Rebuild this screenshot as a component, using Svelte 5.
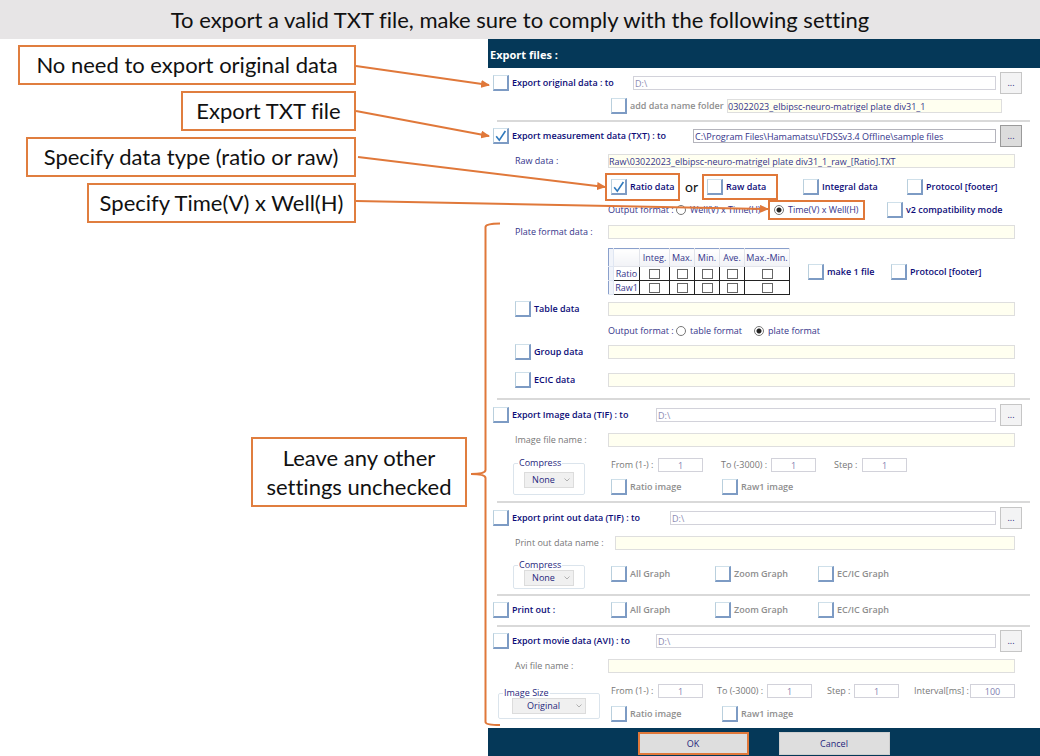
<script>
  const notes = [
    { text: 'No need to export original data', size: 'n1' },
    { text: 'Export TXT file', size: 'n2' },
    { text: 'Specify data type (ratio or raw)', size: 'n3' },
    { text: 'Specify Time(V) x Well(H)', size: 'n4' }
  ];
  const stats = ['Integ.', 'Max.', 'Min.', 'Ave.', 'Max.-Min.'];
  const plateRows = ['Ratio', 'Raw1'];
  const graphs = ['All Graph', 'Zoom Graph', 'EC/IC Graph'];
  const folder = '03022023_elbipsc-neuro-matrigel plate div31_1';
</script>

{#snippet check(text, on = false, off = false, cls = '')}
  <label class="check {cls}" class:off>
    <span class="box">
      <input type="checkbox" checked={on} />
      {#if on}
        <svg viewBox="0 0 16 16" aria-hidden="true"><path d="M3.2 8.2 6.3 12.2 12.4 3" /></svg>
      {/if}
    </span>
    <span>{text}</span>
  </label>
{/snippet}

{#snippet radio(text, group, on = false, cls = '')}
  <label class="radio {cls}"><input type="radio" name={group} checked={on} /><span>{text}</span></label>
{/snippet}

{#snippet num(id, text, value)}
  <label for={id}>{text}</label>
  <input {id} class="field num" type="text" {value} />
{/snippet}

{#snippet pick(title, value, cls)}
  <fieldset class={cls}>
    <legend>{title}</legend>
    <span class="pick">
      <select aria-label={title}><option>{value}</option></select>
      <svg viewBox="0 0 8 6" aria-hidden="true"><path d="M1.5 1.5 4 4 6.5 1.5" /></svg>
    </span>
  </fieldset>
{/snippet}

<div class="page">
  <h1>To export a valid TXT file, make sure to comply with the following setting</h1>

  <main>
    <aside>
      {#each notes as n}
        <p class="note {n.size}">{n.text}</p>
      {/each}
      <p class="note rest">Leave any other<br />settings unchecked</p>
    </aside>

    <form class="dialog" onsubmit={(e) => e.preventDefault()}>
      <h2>Export files :</h2>

      <section class="first">
        <div class="row path p1 h22">
          {@render check('Export original data : to')}
          <input class="field dim" type="text" aria-label="Original data folder" value="D:\" />
          <button type="button" class="browse">...</button>
        </div>
        <div class="row folder h24">
          {@render check('add data name folder', false, true)}
          <input class="field cream" type="text" aria-label="Data name folder" value={folder} />
        </div>
      </section>
      <hr />

      <section>
        <div class="row path p2 h28">
          {@render check('Export measurement data (TXT) : to', true)}
          <input class="field strong" type="text" aria-label="Measurement data folder" value="C:\Program Files\Hamamatsu\FDSSv3.4 Offline\sample files" />
          <button type="button" class="browse dark">...</button>
        </div>
        <div class="row named h22">
          <label for="raw">Raw data :</label>
          <input id="raw" class="field cream" type="text" value="Raw\{folder}_raw_[Ratio].TXT" />
        </div>
        <div class="row kinds h30">
          {@render check('Ratio data', true, false, 'ring')}
          <span class="or">or</span>
          {@render check('Raw data', false, false, 'ring roomy')}
          {@render check('Integral data')}
          {@render check('Protocol [footer]')}
        </div>
        <div class="row output h14">
          <span>Output format :</span>
          {@render radio('Well(V) x Time(H)', 'raw-format')}
          {@render radio('Time(V) x Well(H)', 'raw-format', true, 'ring')}
          {@render check('v2 compatibility mode')}
        </div>
        <div class="row named h32">
          <label for="plate">Plate format data :</label>
          <input id="plate" class="field cream" type="text" value="" />
        </div>
        <div class="row plate">
          <table>
            <colgroup>
              <col class="c-edge" /><col class="c-name" /><col class="c-integ" /><col class="c-max" /><col class="c-min" /><col class="c-ave" /><col />
            </colgroup>
            <thead>
              <tr><th class="edge"></th><th class="corner"></th>{#each stats as s}<th scope="col">{s}</th>{/each}</tr>
            </thead>
            <tbody>
              {#each plateRows as r}
                <tr>
                  <td class="edge"></td>
                  <th scope="row">{r}</th>
                  {#each stats as s}
                    <td><input type="checkbox" aria-label="{r} {s}" /></td>
                  {/each}
                </tr>
              {/each}
            </tbody>
          </table>
          {@render check('make 1 file')}
          {@render check('Protocol [footer]')}
        </div>
        <div class="row named h28">
          {@render check('Table data')}
          <input class="field cream" type="text" aria-label="Table data name" value="" />
        </div>
        <div class="row output2 h16">
          <span>Output format :</span>
          {@render radio('table format', 'table-format')}
          {@render radio('plate format', 'table-format', true)}
        </div>
        <div class="row named h26">
          {@render check('Group data')}
          <input class="field cream" type="text" aria-label="Group data name" value="" />
        </div>
        <div class="row named h30">
          {@render check('ECIC data')}
          <input class="field cream" type="text" aria-label="ECIC data name" value="" />
        </div>
      </section>
      <hr />

      <section>
        <div class="row path p3 h30">
          {@render check('Export Image data (TIF) : to')}
          <input class="field dim" type="text" aria-label="Image data folder" value="D:\" />
          <button type="button" class="browse">...</button>
        </div>
        <div class="row named grey h20">
          <label for="img">Image file name :</label>
          <input id="img" class="field cream" type="text" value="" />
        </div>
        <div class="split">
          {@render pick('Compress', 'None', 'compress')}
          <div>
            <div class="nums grey h24">
              {@render num('i-from', 'From (1-) :', '1')}
              {@render num('i-to', 'To (-3000) :', '1')}
              {@render num('i-step', 'Step :', '1')}
            </div>
            <div class="images h20">
              {@render check('Ratio image', false, true)}
              {@render check('Raw1 image', false, true)}
            </div>
          </div>
        </div>
      </section>
      <hr class="loose" />

      <section>
        <div class="row path p4 h30">
          {@render check('Export print out data (TIF) : to')}
          <input class="field dim" type="text" aria-label="Print out data folder" value="D:\" />
          <button type="button" class="browse">...</button>
        </div>
        <div class="row named wide grey h20">
          <label for="prn">Print out data name :</label>
          <input id="prn" class="field cream" type="text" value="" />
        </div>
        <div class="split print">
          {@render pick('Compress', 'None', 'compress low')}
          <div class="graphs">
            {#each graphs as g}{@render check(g, false, true)}{/each}
          </div>
        </div>
      </section>
      <hr />

      <section>
        <div class="split single h28">
          <div class="lead">{@render check('Print out :')}</div>
          <div class="graphs">
            {#each graphs as g}{@render check(g, false, true)}{/each}
          </div>
        </div>
      </section>
      <hr class="tight" />

      <section>
        <div class="row path p3 h28">
          {@render check('Export movie data (AVI) : to')}
          <input class="field dim" type="text" aria-label="Movie data folder" value="D:\" />
          <button type="button" class="browse">...</button>
        </div>
        <div class="row named grey h22">
          <label for="avi">Avi file name :</label>
          <input id="avi" class="field cream" type="text" value="" />
        </div>
        <div class="split movie">
          {@render pick('Image Size', 'Original', 'imgsize')}
          <div>
            <div class="nums four grey h24">
              {@render num('m-from', 'From (1-) :', '1')}
              {@render num('m-to', 'To (-3000) :', '1')}
              {@render num('m-step', 'Step :', '1')}
              {@render num('m-int', 'Interval[ms] :', '100')}
            </div>
            <div class="images h22">
              {@render check('Ratio image', false, true)}
              {@render check('Raw1 image', false, true)}
            </div>
          </div>
        </div>
      </section>

      <footer>
        <button type="submit" class="ok">OK</button>
        <button type="button">Cancel</button>
      </footer>
    </form>

    <svg class="arrows" width="800" height="717" viewBox="0 39 800 717" aria-hidden="true">
      <defs>
        <marker id="head" markerUnits="userSpaceOnUse" markerWidth="9" markerHeight="8" refX="8" refY="4" orient="auto">
          <path class="tip" d="M0 0 9 4 0 8Z" />
        </marker>
      </defs>
      <path marker-end="url(#head)" d="M356 66 489 85" />
      <path marker-end="url(#head)" d="M356 111 489 136" />
      <path marker-end="url(#head)" d="M358 157 605 187" />
      <path marker-end="url(#head)" d="M356 201 768 209" />
      <path d="M500 223.500Q485.500 223.500 485.500 227V470Q485.500 474 471 474Q485.500 474 485.500 478V722Q485.500 725 500 725" />
    </svg>
  </main>
</div>

<style>
  :global(body) { margin: 0; background: #fff; }
  .page { font: 9px/12px "Open Sans", "Noto Sans", sans-serif; color: #34348a; }
  h1 {
    margin: 0; height: 39px; background: #e7e5e6; color: #111; text-align: center;
    font: 400 22px/39px Lato, sans-serif; font-variant-ligatures: none;
  }
  main { position: relative; display: grid; grid-template-columns: 488px 1fr; }
  aside { display: flex; flex-direction: column; align-items: flex-end; gap: 6px; padding: 6px 132px 0 0; }
  .note {
    box-sizing: border-box; margin: 0; min-height: 40px; border: 2px solid #e07e3f; background: #fff; color: #111;
    font: 22px/36px Lato, sans-serif; font-variant-ligatures: none; text-align: center; white-space: nowrap;
  }
  .n1 { min-width: 338px; }
  .n2 { min-width: 175px; }
  .n3 { min-width: 330px; }
  .n4 { min-width: 269px; }
  .rest { min-width: 216px; margin: 208px -111px 0 0; padding: 4px 0; line-height: 29px; }

  .arrows { position: absolute; left: 0; top: 0; pointer-events: none; fill: none; stroke: #e0783a; stroke-width: 2; }
  .tip { fill: #e0783a; stroke: none; }

  .dialog { min-width: 0; background: #fff; }
  h2 { margin: 0; height: 29px; background: #053858; color: #fff; padding-left: 2px; font: 700 11px/31px "Open Sans", sans-serif; }
  hr { margin: 3px 10px 0 9px; border: 0; height: 2px; background: #d9d9d9; }
  .first { padding-top: 4px; }
  .first + hr { margin-top: 2px; }
  .loose { margin-top: 4px; }
  .tight { margin-top: 1px; }
  .h14 { height: 14px; } .h16 { height: 16px; } .h20 { height: 20px; } .h22 { height: 22px; } .h24 { height: 24px; }
  .h26 { height: 26px; } .h28 { height: 28px; } .h30 { height: 30px; } .h32 { height: 32px; }

  .row, .nums, .images, .graphs { display: grid; align-items: center; white-space: nowrap; }
  .path { padding: 0 18px 0 5px; }
  .p1 { grid-template-columns: 140px 1fr 26px; }
  .p2 { grid-template-columns: 200px 1fr 26px; }
  .p3 { grid-template-columns: 163px 1fr 26px; }
  .p4 { grid-template-columns: 177px 1fr 26px; }
  .folder { grid-template-columns: 116px 1fr; padding: 0 38px 0 123px; }
  .named { grid-template-columns: 93px 1fr; padding: 0 25px 0 27px; }
  .wide { grid-template-columns: 100px 1fr; }
  .kinds { grid-template-columns: 72px 24px 96px 104px 1fr; padding-left: 123px; }
  .output { grid-template-columns: 68px 98px 113px 1fr; padding-left: 120px; }
  .output2 { grid-template-columns: 68px 78px 1fr; padding-left: 120px; }
  .plate { grid-template-columns: 200px 83px 1fr; padding-left: 120px; height: 47px; }
  .split { display: grid; grid-template-columns: 123px 1fr; padding-top: 3px; }
  .print { padding-top: 7px; height: 31px; align-items: start; }
  .single { padding-top: 0; align-items: center; }
  .lead { padding-left: 5px; }
  .nums { grid-template-columns: 47px 63px 50px 63px 28px 45px; }
  .four { grid-template-columns: 47px 59px 50px 60px 27px 60px 56px 45px; }
  .images { grid-template-columns: 111px 1fr; }
  .graphs { grid-template-columns: 104px 103px 1fr; height: 28px; }
  .movie { padding: 2px 0 3px; }

  .check { display: flex; align-items: center; gap: 3px; font-weight: 600; color: #0c0c78; justify-self: start; }
  .off { color: #8e8e8e; }
  .box { display: grid; width: 16px; height: 16px; }
  .box > * { grid-area: 1 / 1; }
  .box input {
    appearance: none; box-sizing: border-box; margin: 0; width: 16px; height: 16px; background: #fff;
    border: solid; border-width: 1px 2px 2px 1px; border-color: #cfe0ea #7d9bc4 #7d9bc4 #b9cfdd;
  }
  .box svg { width: 16px; height: 16px; fill: none; stroke: #2f79bd; stroke-width: 1.6; pointer-events: none; }
  .ring { outline: 2px solid #e0783a; outline-offset: 4px; }
  .roomy { padding-right: 7px; outline-offset: 3px; }
  .radio.ring { outline-offset: 2px; padding: 0 2px; margin-left: -2px; }
  .or { color: #111; font: 14px/16px Lato, sans-serif; padding-left: 2px; }

  .radio { display: flex; align-items: center; gap: 4px; justify-self: start; }
  .radio input {
    appearance: none; box-sizing: border-box; margin: 0; width: 10px; height: 10px; border: 1px solid #777; border-radius: 50%; background: #fff;
  }
  .radio input:checked { background: radial-gradient(circle, #222 0 2px, #fff 3px); }

  .field {
    box-sizing: border-box; width: 100%; min-width: 0; height: 14px; margin: 0; padding: 0 1px; border: 1px solid #d2d2da;
    background: #fff; color: #34348a; font: inherit; border-radius: 0;
  }
  .cream { background: #fffff0; border-color: #dedede; padding: 0; }
  .strong { border-color: #b4b4bc; }
  .dim { color: #8c8cb4; }
  .num { text-align: center; color: #8080b0; width: 45px; }
  .grey { color: #777; }
  button { font: inherit; color: #26267c; }
  .browse {
    justify-self: end; box-sizing: border-box; width: 22px; height: 22px; padding: 0; border: 1px solid #c6c6c6; background: #f3f3f4;
  }
  .dark { background: #dcdcdc; border-color: #9a9a9a; }

  table { border-collapse: collapse; width: 182px; height: 47px; border: 1px solid #8aa0cc; table-layout: fixed; }
  .c-edge { width: 5px; } .c-name { width: 26px; } .c-integ { width: 30px; } .c-max { width: 25px; } .c-min, .c-ave { width: 25px; }
  th, td { padding: 0; border: 1px solid #222; text-align: center; font-weight: 400; line-height: 12px; height: 13px; }
  thead th { border: 1px solid #e2e4ea; border-top-color: #8aa0cc; background: linear-gradient(#fff, #f1f2f6); height: 17px; }
  .edge, thead .edge { border-color: #dfe6f2; border-left-color: #8aa0cc; background: #f1f4fa; }
  thead .edge { border-top-color: #8aa0cc; }
  td input {
    appearance: none; display: block; box-sizing: border-box; width: 11px; height: 10px; margin: 0 auto; border: 1px solid #666; background: #fff;
  }

  fieldset {
    box-sizing: border-box; min-width: 0; margin: 5px 0 0 25px; padding: 0; width: 72px; height: 37px; border: 1px solid #dbe4ec; border-radius: 2px;
    display: flex; justify-content: center; align-items: start;
  }
  .compress { margin-bottom: -2px; }
  legend { margin-left: 4px; padding: 0 1px; line-height: 10px; color: #26267c; }
  .low { margin-top: 0; height: 29px; }
  .imgsize { width: 102px; height: 31px; margin: 9px 0 0 10px; }
  .pick { display: grid; width: 50px; margin-top: 4px; }
  .low .pick, .imgsize .pick { margin-top: 0; }
  .imgsize .pick { width: 74px; }
  .pick > * { grid-area: 1 / 1; }
  .pick svg { width: 8px; height: 6px; justify-self: end; align-self: center; margin-right: 3px; fill: none; stroke: #b0b0b0; pointer-events: none; }
  select {
    appearance: none; box-sizing: border-box; width: 100%; height: 16px; margin: 0; padding: 0 11px 0 0; border: 1px solid #dcdcdc; border-radius: 0;
    background: #f0f0f0; color: #26267c; font: inherit; text-align: center; text-align-last: center;
  }

  footer { display: flex; justify-content: center; gap: 30px; background: #053858; padding: 4px 1px 1px 0; }
  footer button { box-sizing: border-box; width: 111px; height: 23px; border: 1px solid #cfcfcf; background: #dedede; padding: 0; }
  footer .ok { border: 2px solid #e0783a; }
</style>
